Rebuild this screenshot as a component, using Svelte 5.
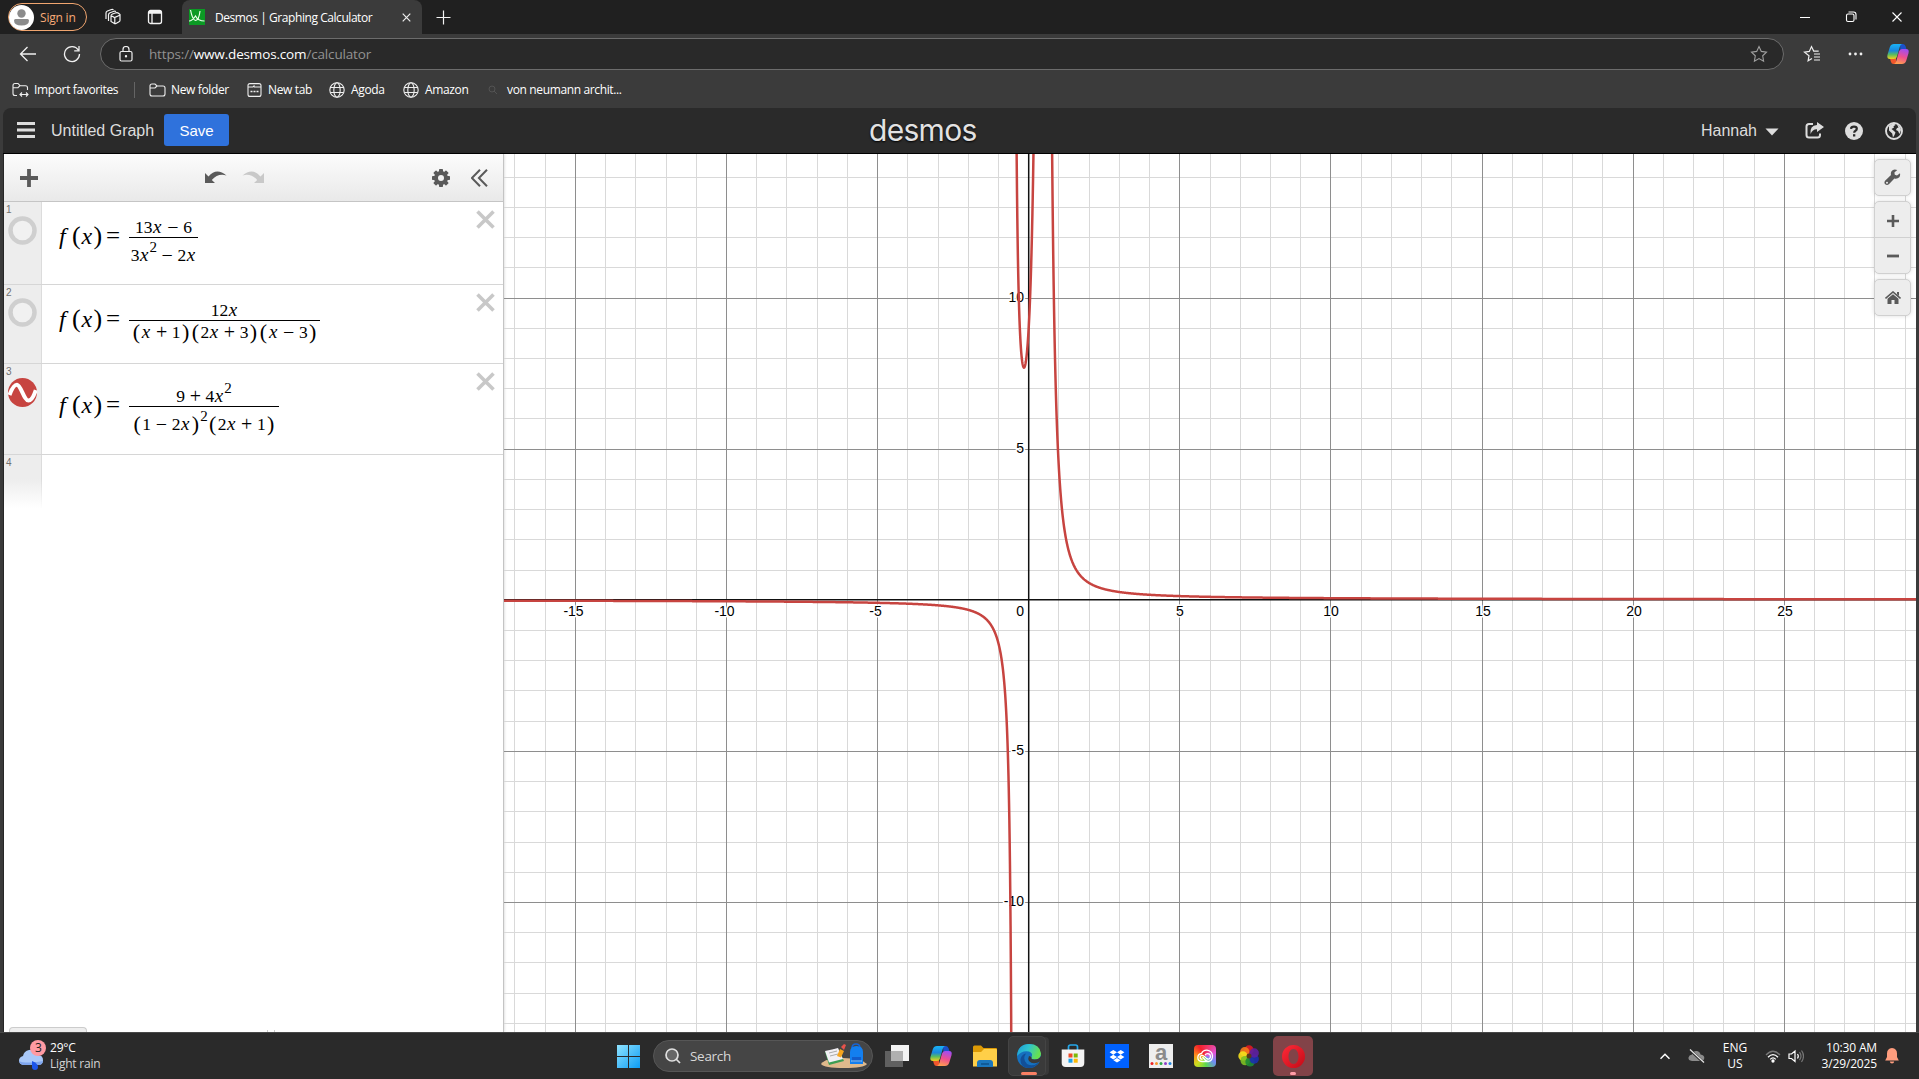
<script>
  const U = 30.224, OX = 524.7, OY = 445.8, W = 1412, H = 878;
  const xs = [], ys = [];
  for (let i = -17; i <= 29; i++) {
    const p = OX + i * U;
    if (p > 0 && p < W) xs.push({ i, p: Math.floor(p) + 0.5 });
  }
  for (let i = -14; i <= 14; i++) {
    if (i) ys.push({ i, p: Math.round(OY - i * U) + 0.5 });
  }
  const f = (x) => (9 + 4 * x * x) / ((1 - 2 * x) ** 2 * (2 * x + 1));
  function branch(a, b) {
    let d = '';
    const step = 0.01;
    for (let x = a; x < b; x += step) {
      const y = f(x);
      if (Math.abs(y) > 60) continue;
      d += `${d ? 'L' : 'M'}${(OX + x * U).toFixed(2)} ${(OY - y * U).toFixed(2)}`;
    }
    return d;
  }
  const curves = [branch(-18, -0.501), branch(-0.497, 0.497), branch(0.503, 30)];

  // Token kinds: n number, v variable, o operator, p parenthesis, s superscript
  const tok = (s) => s.split(' ').map((t) => ({
    t: t.replace('^', ''),
    k: t[0] === '^' ? 's' : t === 'x' ? 'v' : '+−'.includes(t) ? 'o' : '()'.includes(t) ? 'p' : 'n'
  }));
  const rows = [
    { n: 1, c: 'r1', num: tok('13 x − 6'), den: tok('3 x ^2 − 2 x') },
    { n: 2, c: 'r2', num: tok('12 x'), den: tok('( x + 1 ) ( 2 x + 3 ) ( x − 3 )') },
    { n: 3, c: 'r3', num: tok('9 + 4 x ^2'), den: tok('( 1 − 2 x ) ^2 ( 2 x + 1 )'), on: true }
  ];
  const teeth = [0, 45, 90, 135, 180, 225, 270, 315];
  const wheel = [
    ['#e11b22', 30], ['#f47a1c', -15], ['#f5e11c', -60], ['#7dc024', -110],
    ['#1d8a35', -160], ['#1b2fb0', 150], ['#5d1fa0', 90]
  ];
</script>

{#snippet globe()}
  <svg width="16" height="16" viewBox="0 0 16 16" fill="none" stroke="#eee" stroke-width="1.1">
    <circle cx="8" cy="8" r="7.2" /><ellipse cx="8" cy="8" rx="3.2" ry="7.2" /><path d="M1.4 5.5h13.2M1.4 10.5h13.2" />
  </svg>
{/snippet}

{#snippet copilot(id)}
  <svg width="24" height="24" viewBox="0 0 24 24">
    <defs>
      <linearGradient id="{id}a" x1="0" y1="0" x2="0" y2="1"><stop offset="0" stop-color="#19b3f5" /><stop offset=".45" stop-color="#1a86dd" /><stop offset=".7" stop-color="#58bb62" /><stop offset="1" stop-color="#f2d21c" /></linearGradient>
      <linearGradient id="{id}b" x1=".6" y1="0" x2=".3" y2="1"><stop offset="0" stop-color="#a14df0" /><stop offset=".5" stop-color="#ee4f8f" /><stop offset="1" stop-color="#ffa04d" /></linearGradient>
    </defs>
    <path d="M14 2h3q2 0 2.700 2.600l.8 2.800h-4q-1.500 0-2 1.800z" fill="#1b50c9" />
    <path d="M10 22H7.500q-2 0-2.600-2.200L4 16.500h4q1.500 0 2-1.800z" fill="#f0562c" />
    <path d="M8 2h8q-1.600.5-2.300 3L11 14.500Q10.300 17 8 17H4Q.5 17 1.500 12.800L3.800 5.200Q5 2 8 2z" fill="url(#{id}a)" />
    <path d="M16 22H8q1.600-.5 2.300-3L13 9.500Q13.700 7 16 7h4q3.500 0 2.500 4.200l-2.300 7.600Q19 22 16 22z" fill="url(#{id}b)" />
  </svg>
{/snippet}

{#snippet math(tokens)}
  {#each tokens as t}<span class={t.k}>{t.t}</span>{/each}
{/snippet}

<div class="screen">
  <div class="tabs">
    <div class="signin">
      <svg width="25" height="25" viewBox="0 0 25 25"><circle cx="12.500" cy="12.500" r="12.500" fill="#fff" /><circle cx="12.500" cy="8.500" r="4.200" fill="#8b8b8b" /><path d="M5 15.500q0-1.500 1.500-1.500h12q1.500 0 1.500 1.500 0 5-7.500 5T5 15.500z" fill="#8b8b8b" /></svg>
      <span>Sign in</span>
    </div>
    <svg class="ws" width="18" height="18" viewBox="0 0 18 18" fill="none" stroke="#f4f4f4" stroke-width="1.200"><path d="M7 8q0-1.500 1.500-2l3.500-1.200q1.500-.4 2.500.4l1.500 1.300v5.700q0 1.200-1 1.600l-3 1.700q-1 .5-2-.2L7 13.500zM7 7.500l3.500 2 5.200-2.300M10.800 9.500v6M4.500 13V7q0-1.500 1.500-2.200L10 3.300q1-.3 2 .2M2 11V5q0-1.400 1.500-2L7.500 1.500q1-.4 2 .2" /></svg>
    <svg class="ta" width="16" height="16" viewBox="0 0 16 16" fill="none" stroke="#f4f4f4" stroke-width="1.300"><rect x="1.500" y="1.500" width="13" height="13" rx="2" /><path d="M1.500 4h13M5 4v10" /><path d="M2 3h12" stroke-width="2" /></svg>
    <div class="tab">
      <svg width="16" height="16" viewBox="0 0 16 16"><rect width="16" height="16" fill="#0b9a24" /><path d="M1.500 1q2 10 5 10.500Q10 11 11 2M0 12q3 0 6.500-5Q9 12 15.500 12" fill="none" stroke="#e9ffe9" stroke-width="1.200" /></svg>
      <span>Desmos | Graphing Calculator</span>
      <svg class="tx" width="9" height="9" viewBox="0 0 9 9" stroke="#eee" stroke-width="1.200"><path d="M.7.700l7.600 7.600M8.300.700.700 8.300" /></svg>
    </div>
    <svg class="newtab" width="15" height="15" viewBox="0 0 15 15" stroke="#f4f4f4" stroke-width="1.200"><path d="M7.500.500v14M.500 7.500h14" /></svg>
    <svg class="win" width="110" height="12" viewBox="0 0 110 12" fill="none" stroke="#fff" stroke-width="1.100"><path d="M6 6.500h10M98.500 1.500l9 9M107.500 1.500l-9 9" /><rect x="52.500" y="3" width="7.500" height="7.500" rx="1.500" /><path d="M54.500 1h5q2.500 0 2.500 2.500v5" /></svg>
  </div>

  <div class="nav">
    <svg class="back" width="18" height="16" viewBox="0 0 18 16" fill="none" stroke="#f0f0f0" stroke-width="1.300"><path d="M17 8H1.500M8.500 1l-7 7 7 7" /></svg>
    <svg class="reload" width="18" height="18" viewBox="0 0 18 18" fill="none" stroke="#f0f0f0" stroke-width="1.300"><path d="M15.300 5A7.500 7.500 0 1 0 16.500 9M16 1v4.800h-4.800" /></svg>
    <div class="addr">
      <svg width="14" height="16" viewBox="0 0 14 16" fill="none" stroke="#f0f0f0" stroke-width="1.200"><rect x="1" y="5.500" width="12" height="9.500" rx="1.500" /><path d="M4 5.500V3.500a3 3 0 0 1 6 0v2" /><circle cx="7" cy="10.200" r=".6" fill="#fff" /></svg>
      <span>https://<b>www.desmos.com</b>/calculator</span>
      <svg class="star" width="18" height="18" viewBox="0 0 18 18" fill="none" stroke="#a0a0a0" stroke-width="1.100"><path d="m9 1.500 2.300 4.900 5.200.7-3.800 3.700.9 5.400L9 13.600l-4.600 2.600.9-5.400L1.500 7.100l5.200-.7z" /></svg>
    </div>
    <svg class="favs" width="18" height="18" viewBox="0 0 18 18" fill="none" stroke="#f0f0f0" stroke-width="1.200"><path d="m9 13.500-3.900 2.300.9-5L1.500 7.100l4.800-.7L8.500 1.600l2.200 4.500h5M11 9h6M11 12h6M11 15h6" /></svg>
    <svg class="dots" width="15" height="4" viewBox="0 0 15 4" fill="#f0f0f0"><circle cx="2" cy="2" r="1.400" /><circle cx="7.500" cy="2" r="1.400" /><circle cx="13" cy="2" r="1.400" /></svg>
    {@render copilot('n')}
  </div>

  <div class="marks">
    <span class="m m1"><svg width="17" height="16" viewBox="0 0 17 16" fill="none" stroke="#eee" stroke-width="1.100"><path d="M5 13.500H3q-2 0-2-2V3.500q0-2 2-2h3l2 2.200h5.500q2 0 2 2V8M1 5.700h5l2-2M8 12.500h8M10 10.500l-2 2 2 2M14 10.500l2 2-2 2" /></svg>Import favorites</span>
    <i></i>
    <span class="m m2"><svg width="17" height="14" viewBox="0 0 17 14" fill="none" stroke="#eee" stroke-width="1.100"><path d="M1 3q0-2 2-2h3l2 2h6q2 0 2 2v6q0 2-2 2H3q-2 0-2-2zM1 5h5l2-2" /></svg>New folder</span>
    <span class="m m3"><svg width="15" height="14" viewBox="0 0 15 14" fill="none" stroke="#eee" stroke-width="1.100"><rect x="1" y=".6" width="13" height="12.800" rx="2" /><path d="M1 4h5l1.500-1.500M7 4h7" /><path d="M3.500 8.500h2M6.500 8.500h2M9.500 8.500h2" stroke-width="1.500" /></svg>New tab</span>
    <span class="m m4">{@render globe()}Agoda</span>
    <span class="m m5">{@render globe()}Amazon</span>
    <span class="m m6"><svg width="10" height="10" viewBox="0 0 10 10" fill="none" stroke="#535353"><circle cx="4" cy="4" r="3" /><path d="m6 6 3 3" /></svg>von neumann archit...</span>
  </div>

  <div class="page">
    <header>
      <svg class="burger" width="18" height="17" viewBox="0 0 18 17" fill="#ddd"><path d="M0 0h18v3H0zM0 6.500h18v3H0zM0 13h18v3H0z" /></svg>
      <span class="title">Untitled Graph</span>
      <button class="save">Save</button>
      <span class="logo">desmos</span>
      <span class="user">Hannah</span>
      <svg class="caret" width="14" height="8" viewBox="0 0 14 8"><path d="M.5.500h13L7 7.500z" fill="#ddd" /></svg>
      <svg class="share" width="19" height="17" viewBox="0 0 19 17"><path d="M8 2H4Q1.500 2 1.500 4.500v8.500Q1.500 15.500 4 15.500h8.500q2.500 0 2.500-2.500v-1.500" fill="none" stroke="#ddd" stroke-width="2" /><path d="M12 0l7 5-7 5V7.200Q7.500 7 5.500 12 4.500 3.500 12 3z" fill="#ddd" /></svg>
      <svg class="help" width="18" height="18" viewBox="0 0 18 18"><circle cx="9" cy="9" r="9" fill="#ddd" /><path d="M6 6.900Q6.200 4.700 9 4.700t2.800 2.100Q11.800 8 10.500 8.700 9.200 9.400 9.200 10.800" fill="none" stroke="#2a2a2a" stroke-width="2.200" /><rect x="8" y="12.200" width="2.300" height="2.300" fill="#2a2a2a" /></svg>
      <svg class="world" width="18" height="18" viewBox="0 0 18 18"><circle cx="9" cy="9" r="8" fill="none" stroke="#ddd" stroke-width="1.900" /><path d="M4 4Q6 1.500 9 1.500L10.500 3 8.500 4.200 9 5.500 6.500 7l2.500 2 1.500 1.500-1 2.500-1.500 2.500-.8-4L4 8.500zM12 2.500q3.500 1.500 4 5.500l-1.500 4-1.500-3-2-1 1-2 1.500-.5z" fill="#ddd" /></svg>
    </header>

    <div class="work">
      <aside>
        <div class="bar">
          <svg class="add" width="18" height="18" viewBox="0 0 18 18"><path d="M9 0v18M0 9h18" stroke="#5a5a5a" stroke-width="3.800" /></svg>
          <svg class="undo" width="22" height="14" viewBox="0 0 22 14"><path d="M0 3v10h10L6.800 10Q13 3 21.500 5.500 11.500-3 3.500 6.500z" fill="#5a5a5a" /></svg>
          <svg class="redo" width="22" height="14" viewBox="0 0 22 14"><path d="M22 3v10H12l3.200-3Q9 3 .5 5.500 10.500-3 18.500 6.500z" fill="#c9c9c9" /></svg>
          <svg class="gear" width="18" height="18" viewBox="-9 -9 18 18"><circle r="5" fill="none" stroke="#5a5a5a" stroke-width="4" />{#each teeth as a}<rect x="-2" y="-9" width="4" height="4" rx=".7" fill="#5a5a5a" transform="rotate({a})" />{/each}</svg>
          <svg class="fold" width="17" height="18" viewBox="0 0 17 18" fill="none" stroke="#5a5a5a" stroke-width="2"><path d="M9 .700.900 9 9 17.300M16 .700 7.900 9l8.100 8.300" /></svg>
        </div>
        {#each rows as r}
          <div class="row {r.c}">
            <div class="gut">
              <small>{r.n}</small>
              {#if r.on}
                <svg width="29" height="29" viewBox="0 0 29 29"><circle cx="14.500" cy="14.500" r="14.500" fill="#c74440" /><path d="M1.500 17Q5.500 6.500 9 6.800c4 .4 7 15.800 11.500 15.800 3 0 5.500-5 7.300-10.500" fill="none" stroke="#fff" stroke-width="4" /></svg>
              {:else}
                <svg width="29" height="29" viewBox="0 0 29 29"><circle cx="14.500" cy="14.500" r="12" fill="#f1f1f1" stroke="#cfcfcf" stroke-width="4.500" /></svg>
              {/if}
            </div>
            <div class="eq">
              <div class="head"><span class="v">f</span><span class="p">(</span><span class="v">x</span><span class="p">)</span><span class="o">=</span></div>
              <div class="frac">
                <div class="num">{@render math(r.num)}</div>
                <div class="den">{@render math(r.den)}</div>
              </div>
            </div>
            <svg class="del" width="19" height="19" viewBox="0 0 19 19" stroke="#c8c8c8" stroke-width="3.600"><path d="m1.500 1.500 16 16M17.500 1.500l-16 16" /></svg>
          </div>
        {/each}
        <div class="row r4"><div class="gut"><small>4</small></div></div>
        <div class="rest"></div>
        <div class="foot"><div class="kb"></div><div class="pw"></div></div>
      </aside>

      <main>
        <svg class="plot" width="1412" height="878" viewBox="0 0 1412 878">
          <g shape-rendering="crispEdges" stroke="#d9d9d9">
            {#each xs as g}{#if g.i % 5}<path d="M{g.p} 0V{H}" />{/if}{/each}
            {#each ys as g}{#if g.i % 5}<path d="M0 {g.p}H{W}" />{/if}{/each}
          </g>
          <g shape-rendering="crispEdges" stroke="#8e8e8e">
            {#each xs as g}{#if g.i % 5 === 0}<path d="M{g.p} 0V{H}" />{/if}{/each}
            {#each ys as g}{#if g.i % 5 === 0}<path d="M0 {g.p}H{W}" />{/if}{/each}
          </g>
          <path d="M{OX} 0V{H}M0 {OY}H{W}" stroke="#111" stroke-width="1.500" />
          <g class="ticks">
            {#each xs as g}{#if g.i % 5 === 0 && g.i}<text x={g.i < 0 ? g.p - 2 : g.p + 0.5} y="462" text-anchor="middle">{g.i}</text>{/if}{/each}
            {#each ys as g}{#if g.i % 5 === 0}<text x="520" y={g.p + 3.500} text-anchor="end">{g.i}</text>{/if}{/each}
            <text x="520" y="462" text-anchor="end">0</text>
          </g>
          {#each curves as d}<path {d} fill="none" stroke="#c74440" stroke-width="2.500" stroke-linejoin="round" />{/each}
        </svg>
        <div class="tools">
          <div class="tool"><svg width="17" height="17" viewBox="0 0 17 17"><path d="M16 4.200 13 6.500l-2.200-.700-.4-2.300L13.300 1Q9.500-.5 7.500 2.300 6.500 4 7 6L1.300 11.500Q-.4 13.500 1.200 15.300q1.800 1.600 3.700 0L10.400 9.500q3 .7 4.900-1.300Q16.500 6.500 16 4.200zM3 12.700a1 1 0 1 1 0 2 1 1 0 0 1 0-2z" fill="#5a5a5a" fill-rule="evenodd" /></svg></div>
          <div class="pair">
            <div><svg width="12" height="12" viewBox="0 0 12 12" stroke="#5a5a5a" stroke-width="2.600"><path d="M6 0v12M0 6h12" /></svg></div>
            <div><svg width="12" height="12" viewBox="0 0 12 12" stroke="#5a5a5a" stroke-width="2.800"><path d="M0 6h12" /></svg></div>
          </div>
          <div class="tool"><svg width="16" height="14" viewBox="0 0 16 14"><path d="M.5 7.500 8 1l7.500 6.500" fill="none" stroke="#5a5a5a" stroke-width="1.600" /><path d="M12 1h2v4l-2-1.700zM2.500 7.800 8 3.200l5.500 4.600V13H9.500V9h-3v4h-4z" fill="#5a5a5a" /></svg></div>
        </div>
      </main>
    </div>
  </div>

  <div class="task">
    <div class="weather">
      <svg width="28" height="32" viewBox="0 0 28 32"><path d="M4 25q-4-1-4-4.500T4 16q1-5 6-6 6-1 8.500 5 6 0 5.500 6-.5 3.500-4 4z" fill="#a9c8f8" /><path d="M0 21q6 3 24 0-.5 4-4 4H4q-3-.5-4-4z" fill="#7fa5ec" /><path d="M13 21q6 2.500 6 6a3 3 0 0 1-6 0z" fill="#1d55e8" /><circle cx="19" cy="8" r="8" fill="#ff9aa2" /><text x="19.500" y="12.200">3</text></svg>
      <div><b>29°C</b><span>Light rain</span></div>
    </div>
    <div class="dock">
      <svg class="start" width="23" height="23" viewBox="0 0 23 23"><defs><linearGradient id="w" x1="0" y1="0" x2="1" y2="1"><stop offset="0" stop-color="#8fe3ff" /><stop offset="1" stop-color="#0c9cf5" /></linearGradient></defs><path d="M0 0h11v11H0zM12 0h11v11H12zM0 12h11v11H0zM12 12h11v11H12z" fill="url(#w)" /></svg>
      <div class="search">
        <svg width="16" height="16" viewBox="0 0 16 16" fill="none" stroke="#e0e0e0" stroke-width="1.700"><circle cx="7" cy="7" r="6" fill="#666" /><path d="m11 11 4 4" /></svg>
        <span>Search</span>
        <svg class="art" width="46" height="26" viewBox="0 0 46 26"><path d="M0 21Q4 15 22 15t24 6q-3 4-23 4T0 21z" fill="#dfb98c" /><path d="m4 9 13-3 6 12-15 4z" fill="#3d9d53" /><path d="m4 8 7-1.500 6-1.500 5 11-14 3.500z" fill="#f2f0f5" /><path d="m8 10 8-2M9 13l8-2" stroke="#aaa" /><path d="m16 13 3-7 4 2-3 6.500z" fill="#f7a51e" /><path d="m20 4 3-3 2 1-2 5z" fill="#e6534b" /><path d="M31 5q0-4 4-4t4 4" fill="none" stroke="#1665d8" stroke-width="1.500" /><path d="M29 21V9q0-6 6.500-6T42 9v12z" fill="#137ff0" /><path d="M31 14h9v5h-9z" fill="#125ccc" /><path d="M30 18h11" stroke="#8fd1ff" /></svg>
      </div>
      <div class="slot"><svg width="24" height="22" viewBox="0 0 24 22"><rect x="6" width="18" height="16" fill="#f2f2f2" /><rect y="6" width="18" height="16" fill="#606060" /><path d="M6 6h12v10H6z" fill="#b0b0b0" /></svg></div>
      <div class="slot">{@render copilot('t')}</div>
      <div class="slot"><svg width="24" height="22" viewBox="0 0 24 22"><path d="M0 2q0-1.500 1.500-1.500H8L10.500 3H23q1 0 1 1v5H0z" fill="#dd9a05" /><path d="M0 7h8l3-3h12q1 0 1 1v16.500H0z" fill="#ffcf48" /><path d="M4 22v-4q0-3 3-3h10q3 0 3 3v4z" fill="#1b77bd" /><path d="M8 19h8" stroke="#0e558e" stroke-width="1.600" /></svg></div>
      <div class="slot edge"><div class="tile"><svg width="24" height="24" viewBox="0 0 24 24"><defs><linearGradient id="e1" x1="0" y1="0" x2="1" y2=".3"><stop offset="0" stop-color="#1c9bd8" /><stop offset=".5" stop-color="#2fc4cf" /><stop offset="1" stop-color="#67e04f" /></linearGradient></defs><circle cx="12" cy="12" r="12" fill="#1671bf" /><path d="M0 12Q1 0 12 0t12 9.500q0 6-6.500 6-4 0-3-2.500 2-4-2.500-5.500Q5 6 0 12z" fill="url(#e1)" /><path d="M9 9.500Q5 15 10 20q6 3.500 12-2-4 6.500-11 6Q3 23 3.500 15 5 10 9 9.500z" fill="#124f98" /><path d="M14.500 13q-1 2.500 3 2.500 4.500 0 6.500-3.500v5q-8 4.500-12 0-1.500-2 0-5z" fill="#3a3a3a" /></svg></div><i></i></div>
      <div class="slot"><svg width="24" height="24" viewBox="0 0 24 24"><path d="M7.500 6V3q0-2 2-2h5q2 0 2 2v3" fill="none" stroke="#25a7ea" stroke-width="1.700" /><path d="M.7 5.500h22.600V19q0 4-4 4H4.700q-4 0-4-4z" fill="#f4f4f4" /><path d="M7.500 9.500h4v4h-4z" fill="#ef4b27" /><path d="M12.700 9.500h4v4h-4z" fill="#7eb907" /><path d="M7.500 14.700h4v4h-4z" fill="#18a1ec" /><path d="M12.700 14.700h4v4h-4z" fill="#fcb907" /></svg></div>
      <div class="slot"><svg width="24" height="24" viewBox="0 0 24 24"><rect width="24" height="24" fill="#0061fe" /><path d="m8.300 6 3.700 2.300-3.700 2.400L4.600 8.300zM15.700 6l3.700 2.300-3.700 2.400L12 8.300zM8.300 10.700l3.700 2.300-3.700 2.400L4.600 13zM15.700 10.700l3.700 2.300-3.700 2.400L12 13zM12 14l3.600 2.200L12 18.500l-3.600-2.300z" fill="#fff" /></svg></div>
      <div class="slot"><svg class="az" width="24" height="24" viewBox="0 0 24 24"><rect width="24" height="24" fill="#eeeeee" /><text x="12" y="15.500">a</text><circle cx="3" cy="19.500" r="1.500" fill="#e22" /><circle cx="7.500" cy="19.500" r="1.500" fill="#f8952a" /><circle cx="12" cy="19.500" r="1.500" fill="#2ba84a" /><circle cx="16.500" cy="19.500" r="1.500" fill="#8b3fc8" /><circle cx="21" cy="19.500" r="1.500" fill="#2388e0" /></svg></div>
      <div class="slot"><div class="cc"><svg width="22" height="22" viewBox="0 0 22 22" fill="none" stroke="#fff" stroke-width="1.300"><path d="M14.500 16.500H8Q3.800 16.200 3.800 12.500 4 9 7.500 8.500 9 5 13 5.200q5 .6 5.500 5.600 0 5.200-4 5.700-2 0-3.500-1.700L8.500 12M8.500 14.300q-2.300 0-2.300-2t2-2q1.300 0 2.500 1.300l2 2q2.500 1.500 3.600-1 .7-3.300-2.300-4-2-.2-3 1.500" /></svg></div></div>
      <div class="slot"><svg width="22" height="22" viewBox="-11 -11 22 22">{#each wheel as [c, a]}<circle cx={6 * Math.cos((a - 120) * Math.PI / 180)} cy={6 * Math.sin((a - 120) * Math.PI / 180)} r="4.700" fill={c} opacity=".9" />{/each}<circle r="2.500" fill="#5a3a18" /></svg></div>
      <div class="slot opera"><svg width="23" height="23" viewBox="0 0 23 23"><defs><linearGradient id="op" x1="0" y1="0" x2="1" y2="1"><stop offset="0" stop-color="#ff2a38" /><stop offset="1" stop-color="#c30b17" /></linearGradient></defs><path d="M11.500 0a11.500 11.500 0 1 0 0 23 11.500 11.500 0 0 0 0-23zm0 4c3 0 5 3.500 5 7.500s-2 7.500-5 7.500-5-3.500-5-7.500 2-7.500 5-7.500z" fill="url(#op)" fill-rule="evenodd" /></svg><i></i></div>
    </div>
    <div class="tray">
      <svg class="up" width="10" height="7" viewBox="0 0 10 7" fill="none" stroke="#fff" stroke-width="1.500"><path d="m.5 5.800 4.500-4.500 4.500 4.500" /></svg>
      <svg class="cloud" width="17" height="14" viewBox="0 0 17 14"><path d="M4 12Q0 11.500.5 8.500 1 6 4 5.500 5 1.500 9 2q3 .5 3.500 3.500 4 .5 3.800 3.500Q16 12 13 12z" fill="#8b8b8b" /><path d="m2 1 13 12" stroke="#2a2a2a" stroke-width="2.500" /><path d="m2 .5 14 13" stroke="#e8e8e8" stroke-width="1.200" /></svg>
      <div class="lang"><span>ENG</span><span>US</span></div>
      <svg class="wifi" width="16" height="13" viewBox="0 0 16 13" fill="none" stroke="#fff" stroke-width="1.300"><path d="M1 5q7-7.500 14 0" stroke="#777" /><path d="M3 7.300q5-5.400 10 0M5.200 9.400q2.800-3 5.600 0" /><circle cx="8" cy="11" r="1" fill="#fff" /></svg>
      <svg class="vol" width="16" height="14" viewBox="0 0 16 14" fill="none" stroke="#fff" stroke-width="1.200"><path d="M1 5h2.500L7 2v10.500l-3.500-3H1zM9.500 5q1.600 2 0 4.500" /><path d="M11.500 3.200q3 4 0 8M13.500 1.500q4 5.500 0 11.500" stroke="#777" /></svg>
      <div class="clock"><span>10:30 AM</span><span>3/29/2025</span></div>
      <svg class="bell" width="14" height="16" viewBox="0 0 14 16" fill="#ff9d7e"><path d="M7 0q5 .5 5 5.500V9l1.800 3.500H.2L2 9V5.500Q2 .5 7 0zM4.800 13.500h4.400Q9 15.500 7 15.500t-2.200-2z" /></svg>
    </div>
  </div>
</div>

<style>
  :global(body) { margin: 0; background: #3b3b3b; overflow: hidden; }
  * { box-sizing: border-box; }
  svg { display: block; flex: none; }
  span, b, small { white-space: nowrap; }
  .screen { width: 1919px; height: 1079px; display: flex; flex-direction: column; background: #3b3b3b; color: #fff; font-family: "Open Sans", "Noto Sans", sans-serif; font-size: 12px; }

  .tabs { height: 34px; flex: none; display: flex; align-items: center; background: #202020; padding: 0 15px 0 8px; }
  .signin { width: 79px; height: 28px; border: 1px solid #f0a56f; border-radius: 14px; display: flex; align-items: center; gap: 6px; color: #f7ab78; letter-spacing: -0.2px; }
  .ws { margin-left: 17px; }
  .ta { margin-left: 25px; }
  .tab { margin-left: 19px; width: 240px; height: 34px; background: #3b3b3b; border-radius: 8px 8px 0 0; display: flex; align-items: center; padding: 0 11px 0 7px; letter-spacing: -0.44px; }
  .tab span { margin-left: 10px; }
  .tx { margin-left: auto; }
  .newtab { margin-left: 14px; }
  .win { margin-left: auto; margin-right: 0; }

  .nav { height: 40px; flex: none; display: flex; align-items: center; padding: 0 9px 0 19px; }
  .reload { margin-left: 26px; }
  .addr { margin-left: 19px; width: 1684px; height: 32px; border: 1px solid #6c6c6c; border-radius: 16px; background: #292929; display: flex; align-items: center; padding: 0 15px 0 18px; font-size: 13.500px; color: #929292; letter-spacing: -0.16px; }
  .addr span { margin-left: 16px; }
  .addr b { color: #fff; font-weight: 400; }
  .star { margin-left: auto; }
  .favs { margin-left: 19px; }
  .dots { margin-left: 27px; margin-right: auto; }

  .marks { height: 34px; flex: none; display: flex; align-items: center; padding: 0 0 3px 12px; letter-spacing: -0.36px; }
  .m { display: flex; align-items: center; gap: 6px; }
  .m1 { width: 122px; gap: 5px; }
  .marks i { width: 1px; height: 16px; background: #656565; margin-right: 14px; }
  .m2 { width: 98px; gap: 5px; }
  .m3 { width: 82px; }
  .m4 { width: 74px; }
  .m5 { width: 85px; }
  .m6 { gap: 9px; }

  .page { height: 924px; flex: none; margin: 0 3px 0 3px; background: #2a2a2a; border-radius: 8px 8px 0 0; display: flex; flex-direction: column; font-family: "Liberation Sans", Arial, sans-serif; }
  header { height: 46px; flex: none; border-bottom: 1px solid #000; display: flex; align-items: center; padding: 0 13px 0 14px; color: #ddd; font-size: 16px; }
  .title { margin-left: 16px; width: 113px; }
  .save { width: 65px; height: 32px; border: 0; border-radius: 3px; background: #2f72dc; color: #fff; font: 15px "Liberation Sans", Arial, sans-serif; padding: 0; margin-top: -1px; }
  .logo { margin-left: 640px; width: 112px; font: 400 30px/40px Inter, sans-serif; letter-spacing: -0.7px; color: #e2e2e2; text-shadow: 0 1px 2px #000; margin-top: -2px; }
  .user { margin-left: auto; }
  .caret { margin-left: 8px; margin-top: 2px; }
  .share { margin-left: 26px; }
  .help { margin-left: 21px; }
  .world { margin-left: 22px; }

  .work { flex: 1; display: flex; margin-left: 1px; background: #fff; min-height: 0; }
  aside { width: 500px; flex: none; display: flex; flex-direction: column; border-right: 1px solid #c4c4c4; color: #000; box-shadow: 0 0 3px #0003; }
  .bar { height: 48px; flex: none; background: linear-gradient(#fcfcfc, #e9e9e9); border-bottom: 1px solid #c5c5c5; display: flex; align-items: center; padding: 0 15px 0 16px; }
  .undo { margin-left: 167px; margin-top: -2px; }
  .redo { margin-left: 15px; margin-top: -2px; }
  .gear { margin-left: auto; }
  .fold { margin-left: 21px; }
  .row { display: flex; align-items: flex-start; border-bottom: 1px solid #d6d6d6; flex: none; padding-right: 8px; }
  .r1 { height: 83px; }
  .r2 { height: 79px; }
  .r3 { height: 91px; }
  .r4 { height: 53px; border: 0; }
  .gut { width: 38px; align-self: stretch; background: #ededed; border-right: 1px solid #dcdcdc; padding: 2px 0 0 4px; }
  .r4 .gut { background: linear-gradient(#ededed 45%, #fff); border-image: linear-gradient(#dcdcdc 45%, #fff) 1; }
  .gut small { display: block; font-size: 10px; line-height: 12px; color: #707070; margin-left: -2px; }
  .r2 small { line-height: 11px; }
  .eq { display: flex; margin-left: 15px; align-items: flex-start; font-family: "Liberation Serif", serif; }
  .r1 .eq, .r2 .eq { margin-top: 13px; }
  .r3 .eq { margin-top: 20px; }
  .head { margin-top: 6px; width: 72px; height: 30px; line-height: 30px; font-size: 22px; display: flex; }
  .head .v { font-style: italic; font-size: 24px; width: 12px; }
  .head .v:first-child { width: 15px; padding-left: 2px; }
  .head .p { font-size: 26px; width: 9.500px; }
  .head .o { margin-left: 3px; font-size: 25px; }
  .frac { display: flex; flex-direction: column; font-size: 17.500px; line-height: 22px; }
  .num, .den { display: flex; justify-content: center; height: 22px; }
  .num { border-bottom: 1px solid #000; height: 23px; padding-top: 1px; }
  .frac .v { font-style: italic; font-size: 19px; margin: 0 1px 0 0.5px; }
  .frac .o { font-size: 20px; margin: 0 4.700px; }
  .frac .p { font-size: 22px; margin: 0 1.300px; }
  .frac .s { font-size: 15px; position: relative; top: -8px; }
  .r1 .frac { width: 69px; }
  .r2 .frac { width: 191px; }
  .r3 .frac { width: 150px; }
  .r1 .den, .r3 .den { margin-top: 6px; }
  .del { margin: 8px 0 0 auto; }
  .rest { flex: 1; }
  .foot { display: flex; height: 5px; padding-left: 5px; gap: 180px; }
  .kb { width: 78px; height: 5px; background: #eee; border: 1px solid #ccc; border-bottom: 0; border-radius: 4px 4px 0 0; }
  .pw { width: 8px; height: 2px; margin-top: 3px; border: 1px solid #ccc; border-width: 0 1px; }

  main { flex: none; width: 1412px; position: relative; }
  .ticks { font: 14px "Liberation Sans", Arial, sans-serif; fill: #000; stroke: #fff; stroke-width: 3px; paint-order: stroke; stroke-linejoin: round; }
  .tools { position: absolute; right: 5px; top: 5px; display: flex; flex-direction: column; gap: 5px; }
  .tool, .pair { width: 37px; background: #ededed; border: 1px solid #d0d0d0; border-radius: 5px; box-shadow: 0 0 4px #0002; }
  .tool { height: 37px; display: grid; place-items: center; }
  .pair div { height: 35px; padding-top: 1px; display: grid; place-items: center; }
  .pair div:first-child { height: 36px; padding-top: 2px; border-bottom: 1px solid #d0d0d0; }

  .task { height: 47px; flex: none; background: #2a2a2a; border-top: 1px solid #484848; display: flex; align-items: center; font-size: 12px; }
  .weather { width: 617px; display: flex; align-items: center; padding-left: 19px; gap: 3px; }
  .weather text { font: 12px "Open Sans", sans-serif; text-anchor: middle; fill: #222; }
  .weather div { display: flex; flex-direction: column; line-height: 16px; letter-spacing: -0.2px; }
  .weather b { font-weight: 400; }
  .weather span { color: #d4d4d4; }
  .dock { display: flex; align-items: center; height: 46px; }
  .search { width: 220px; height: 32px; margin: 0 2px 0 13px; border: 1px solid #565656; border-radius: 16px; background: #454545; display: flex; align-items: center; padding: 0 5px 0 11px; font-size: 13.500px; color: #d8d8d8; letter-spacing: -0.3px; }
  .search span { margin-left: 9px; }
  .art { margin-left: auto; }
  .slot { width: 44px; height: 40px; display: grid; place-items: center; position: relative; }
  .tile { width: 36px; height: 40px; border-radius: 5px; background: #3a3a3a; border: 1px solid #444; box-shadow: 4px 0 0 -1px #383838; display: grid; place-items: center; margin-right: 4px; }
  .slot i { position: absolute; bottom: 1px; left: 14px; width: 16px; height: 3px; border-radius: 2px; background: #fa8064; }
  .edge .tile { width: 38px; padding-left: 4px; }
  .opera { width: 40px; margin-left: 2px; border-radius: 5px; background: #824348; }
  .opera i { left: 17px; width: 6px; background: #ff9ea8; }
  .az { overflow: visible; }
  .az text { font: bold 22px/1 "Liberation Sans", sans-serif; text-anchor: middle; fill: #8b8b8b; }
  .cc { width: 22px; height: 22px; border-radius: 4px; background: conic-gradient(from 20deg, #ef3a6d, #e254d8, #6d8cf5, #5bd94b, #cfdc20, #ff8a1c, #f4202b, #ef3a6d); }
  .tray { margin-left: auto; display: flex; align-items: center; padding-right: 20px; }
  .cloud { margin-left: 18px; }
  .lang { width: 30px; margin-left: 15px; display: flex; flex-direction: column; align-items: center; line-height: 16px; }
  .wifi { margin-left: 15px; }
  .vol { margin-left: 7px; }
  .clock { margin-left: 12px; width: 61px; display: flex; flex-direction: column; align-items: flex-end; line-height: 16px; letter-spacing: -0.15px; }
  .bell { margin-left: 8px; }
</style>
